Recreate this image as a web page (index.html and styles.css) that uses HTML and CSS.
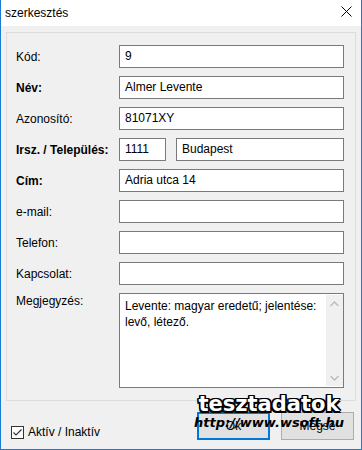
FILE: index.html
```html
<!DOCTYPE html>
<html lang="hu">
<head>
<meta charset="utf-8">
<title>szerkesztés</title>
<link rel="stylesheet" href="styles.css">
</head>
<body>
<div class="window">
  <div class="titlebar">
    <span class="title">szerkesztés</span>
    <svg class="close" width="11" height="11" viewBox="0 0 11 11"><path d="M0.5 0.5 L10.5 10.5 M10.5 0.5 L0.5 10.5" stroke="#000" stroke-width="1" fill="none"/></svg>
  </div>
  <div class="client">
    <div class="group">
      <div class="form">
        <label class="lbl">Kód:</label><div class="field">9</div>
        <label class="lbl bold">Név:</label><div class="field">Almer Levente</div>
        <label class="lbl">Azonosító:</label><div class="field">81071XY</div>
        <label class="lbl bold">Irsz. / Település:</label>
        <div class="pair"><div class="field zip">1111</div><div class="field city">Budapest</div></div>
        <label class="lbl bold">Cím:</label><div class="field">Adria utca 14</div>
        <label class="lbl">e-mail:</label><div class="field"></div>
        <label class="lbl">Telefon:</label><div class="field"></div>
        <label class="lbl">Kapcsolat:</label><div class="field"></div>
        <label class="lbl top">Megjegyzés:</label>
        <div class="memo">
          <div class="memo-text">Levente: magyar eredetű; jelentése: levő, létező.</div>
          <div class="scroll">
            <svg width="9" height="6" viewBox="0 0 9 6"><path d="M0.5 5 L4.5 1 L8.5 5" stroke="#bcbcbc" stroke-width="1.4" fill="none"/></svg>
            <svg width="9" height="6" viewBox="0 0 9 6"><path d="M0.5 1 L4.5 5 L8.5 1" stroke="#bcbcbc" stroke-width="1.4" fill="none"/></svg>
          </div>
        </div>
      </div>
    </div>
    <div class="bottom">
      <div class="check">
        <svg width="13" height="13" viewBox="0 0 13 13"><rect x="0.5" y="0.5" width="12" height="12" fill="#fff" stroke="#333"/><path d="M2.5 6.5 L5 9 L10.5 3.5" stroke="#333" stroke-width="1.2" fill="none"/></svg>
        <span>Aktív / Inaktív</span>
      </div>
      <div class="buttons">
        <button class="btn default">Ok</button>
        <button class="btn">Mégse</button>
      </div>
    </div>
    <div class="watermark">
      <div class="wm1">tesztadatok</div>
      <div class="wm2">http://www.wsoft.hu</div>
    </div>
  </div>
</div>
</body>
</html>
```
FILE: styles.css
```css
html, body { margin: 0; padding: 0; }
body {
  font-family: "Liberation Sans", Arial, sans-serif;
  font-size: 12px;
  color: #000;
  background: #fff;
}
.window {
  width: 362px;
  height: 450px;
  box-sizing: border-box;
  border: 1px solid #1a7bd5;
  border-top: none;
  display: flex;
  flex-direction: column;
}
.titlebar {
  height: 26px;
  background: #fff;
  display: flex;
  align-items: center;
  justify-content: space-between;
  padding: 0 9px 0 4px;
}
.title { font-size: 12px; line-height: 14px; margin-top: -1px; }
.close { margin-top: -3px; }
.client {
  flex: 1;
  background: #f0f0f0;
  position: relative;
  padding: 6px 5px 0 5px;
}
.group {
  height: 369px;
  box-sizing: border-box;
  border: 1px solid #dcdcdc;
  padding: 12px 0 0 9px;
}
.form {
  display: grid;
  grid-template-columns: 103px 225px;
  row-gap: 8px;
  align-items: center;
}
.lbl { line-height: 16px; }
.lbl.bold { font-weight: bold; }
.lbl.top { align-self: start; }
.field {
  height: 23px;
  box-sizing: border-box;
  border: 1px solid #7a7a7a;
  background: #fff;
  padding: 0 5px;
  line-height: 21px;
  white-space: nowrap;
  overflow: hidden;
}
.pair { display: flex; gap: 10px; }
.zip { width: 47px; }
.city { flex: 1; }
.memo {
  height: 95px;
  box-sizing: border-box;
  border: 1px solid #7a7a7a;
  background: #fff;
  display: flex;
}
.memo-text {
  flex: 1;
  padding: 4px 4px 3px 5px;
  line-height: 16px;
}
.scroll {
  width: 17px;
  background: #f0f0f0;
  border: 1px solid #fff;
  border-right: none;
  display: flex;
  flex-direction: column;
  justify-content: space-between;
  align-items: center;
  padding: 6px 0 5px;
}
.bottom {
  display: flex;
  justify-content: space-between;
  padding: 11px 2px 0 5px;
}
.check {
  display: flex;
  align-items: center;
  gap: 4px;
  margin-top: 13px;
  align-self: flex-start;
  line-height: 14px;
}
.check span { font-size: 12px; }
.buttons { display: flex; gap: 11px; }
.btn {
  width: 73px;
  height: 28px;
  box-sizing: border-box;
  border: 1px solid #adadad;
  background: #e1e1e1;
  font: inherit;
  color: #000;
  padding: 0;
}
.btn.default { border: 2px solid #0078d7; }
.watermark {
  position: absolute;
  left: 192px;
  top: 367px;
  width: 152px;
  font-family: "DejaVu Sans", sans-serif;
  font-weight: bold;
  text-align: center;
}
.wm1 {
  font-size: 21px;
  line-height: 22px;
  color: #fff;
  text-shadow: -1.5px -1.5px 0 #000, 1.5px -1.5px 0 #000, -1.5px 1.5px 0 #000, 1.5px 1.5px 0 #000, 0 -1.5px 0 #000, 0 1.5px 0 #000, -1.5px 0 0 #000, 1.5px 0 0 #000;
}
.wm2 {
  font-size: 13px;
  font-style: italic;
  line-height: 16px;
  color: #000;
}
```
